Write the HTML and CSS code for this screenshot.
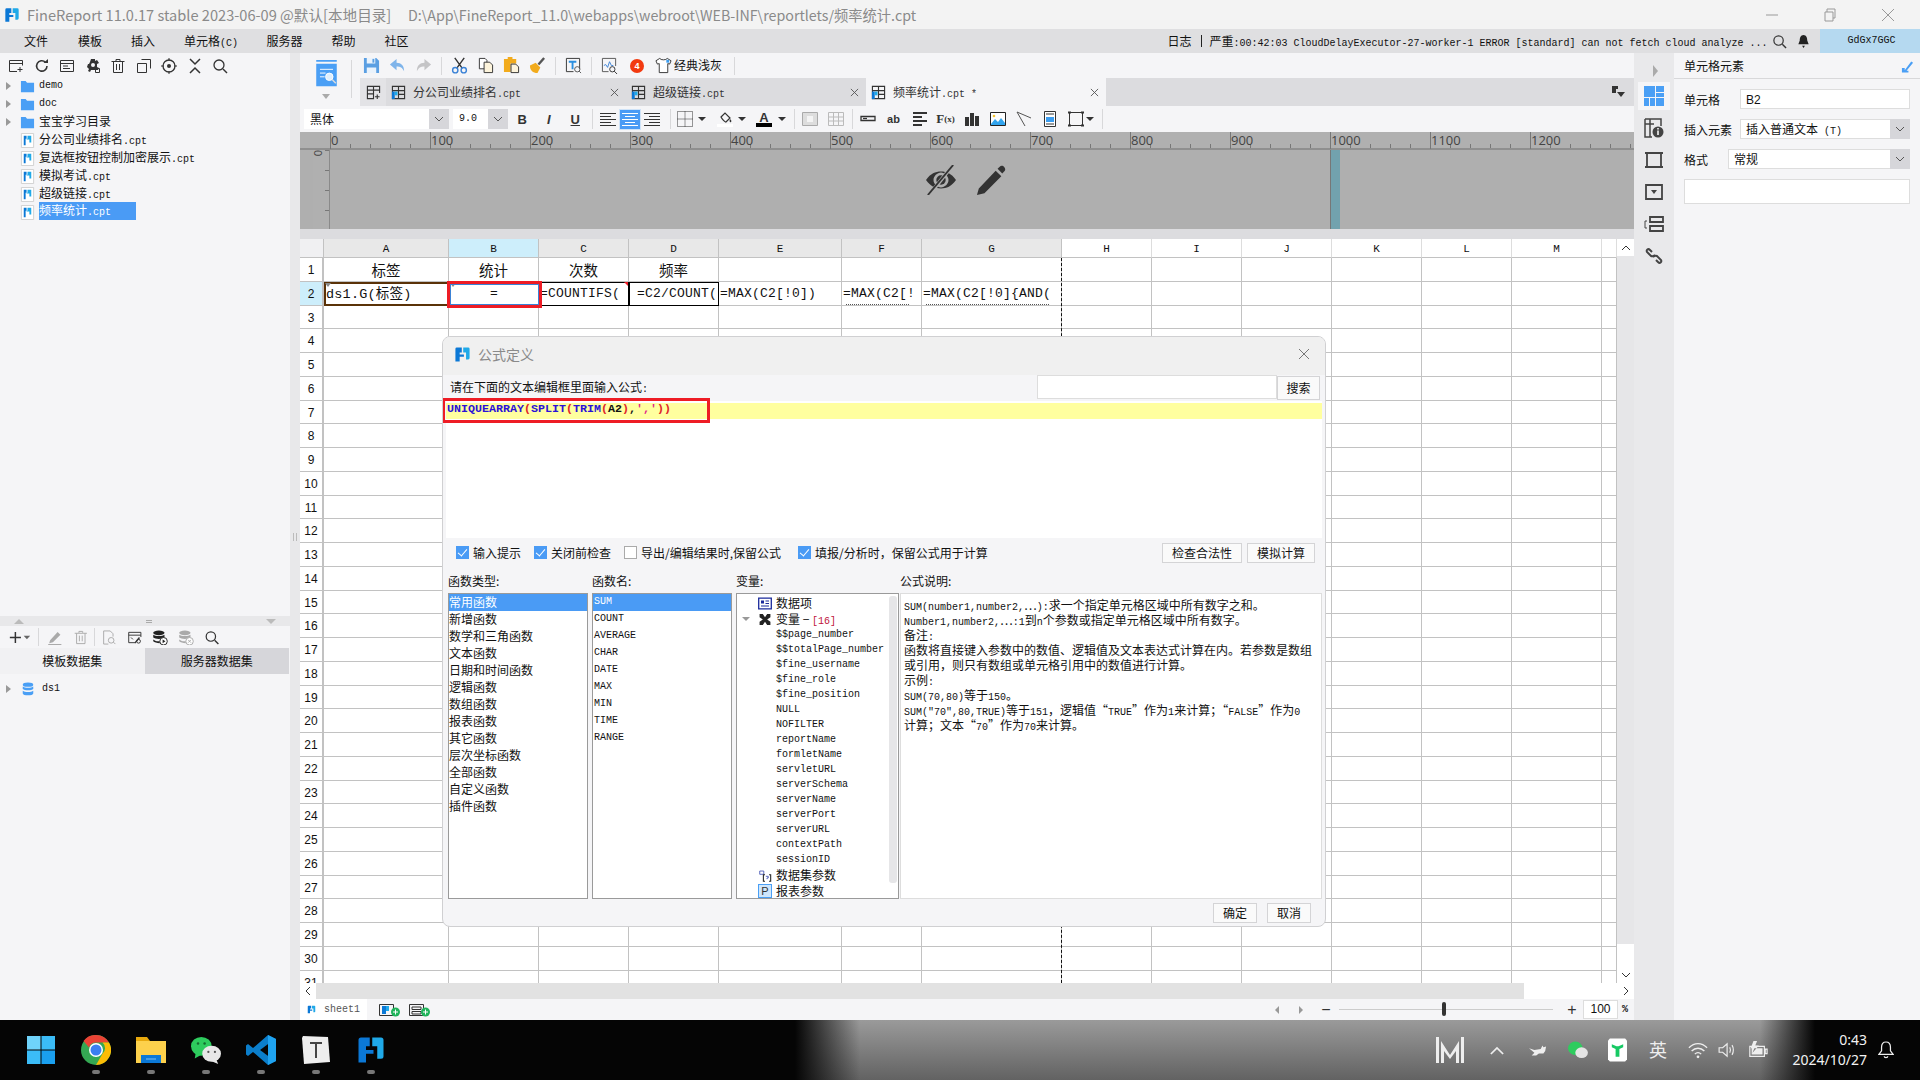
FILE: index.html
```html
<!DOCTYPE html>
<html lang="en">
<head>
    <meta charset="UTF-8">
    <title>FineReport</title>
    <link rel="stylesheet" href="styles.css">
</head>
<body>
<svg class="sprite">
    <symbol id="fr" viewBox="0 0 24 24">
        <path fill="#0b78d6" d="M2 4a2 2 0 0 1 2-2h7v7H8v3h6v3H8v7H2z"/>
        <path fill="#1fa9e8" d="M13 2h7a2 2 0 0 1 2 2v13a2 2 0 0 1-2 2h-3V9h-4z"/>
    </symbol>
    <symbol id="sheetico" viewBox="0 0 16 16">
        <path fill="#fff" stroke="#d0d0d0" d="M1.500.5h13v15h-13z"/>
        <path fill="#0b78d6" d="M4 3h3v3H6v7H4z"/>
        <path fill="#1fa9e8" d="M8 3h4v7h-2V7H7V6h1z"/>
    </symbol>
    <symbol id="gridtab" viewBox="0 0 16 16">
        <path fill="none" stroke="#333" stroke-width="1.200" d="M1.500 1.500h13v13h-13zM1.500 6h13M8 1.500v13M8 10h6.500"/>
        <path fill="#0b78d6" d="M1 7h3v8H1z"/>
        <path fill="#1fa9e8" d="M4 7h3v4H4z"/>
    </symbol>
    <symbol id="folder" viewBox="0 0 16 16">
        <path fill="#4a9ff5" d="M1 2h5l1.500 2H15v10H1z"/>
    </symbol>
    <symbol id="chev" viewBox="0 0 12 12">
        <path fill="none" stroke="#555" d="M2 4l4 4 4-4"/>
    </symbol>
    <symbol id="dd" viewBox="0 0 8 8">
        <path fill="#333" d="M0 2h8L4 6z"/>
    </symbol>
</svg>

<div class="app">
    <header class="titlebar">
        <svg class="title-logo"><use href="#fr"/></svg>
        <span class="title-a">FineReport 11.0.17 stable 2023-06-09 @默认[本地目录]</span>
        <span class="title-b">D:\App\FineReport_11.0\webapps\webroot\WEB-INF\reportlets/频率统计.cpt</span>
        <div class="winbtns">
            <svg viewBox="0 0 14 14"><path d="M1 7h12" stroke="#999"/></svg>
            <svg viewBox="0 0 14 14"><path fill="none" stroke="#999" d="M2 4h8v9H2zM4 4V1h8v9h-2"/></svg>
            <svg viewBox="0 0 14 14"><path fill="none" stroke="#999" d="M1 1l12 12M13 1L1 13"/></svg>
        </div>
    </header>

    <nav class="menubar">
        <span class="m m1">文件</span>
        <span class="m m2">模板</span>
        <span class="m m3">插入</span>
        <span class="m m4">单元格<i class="en">(C)</i></span>
        <span class="m m5">服务器</span>
        <span class="m m6">帮助</span>
        <span class="m m7">社区</span>
        <div class="logbar">
            <span>日志</span>
            <b class="logsep"></b>
            <span class="logtext">严重<i class="en">:00:42:03 CloudDelayExecutor-27-worker-1 ERROR [standard] can not fetch cloud analyze ...</i></span>
            <svg class="logicon" viewBox="0 0 16 16"><circle cx="7" cy="7" r="5" fill="none" stroke="#333" stroke-width="1.300"/><path d="M11 11l4 4" stroke="#333" stroke-width="1.500"/></svg>
            <svg class="logicon" viewBox="0 0 16 16"><path fill="#222" d="M8 1c3 0 4 3 4 6l1.500 4h-11L4 7c0-3 1-6 4-6zM6.500 12.500h3L8 15z"/></svg>
        </div>
        <div class="usercell en">GdGx7GGC</div>
    </nav>

    <div class="work">
        <aside class="left">
            <div class="left-top">
                <div class="ltools">
                    <svg viewBox="0 0 16 16"><path fill="none" stroke="#333" d="M1.500 2.500h13v5M9 13.500H1.500v-11M1.500 5.500h13M12 9v5M9.500 11.500h5"/></svg>
                    <svg viewBox="0 0 16 16"><path fill="none" stroke="#333" stroke-width="1.600" d="M13 8a5.200 5.200 0 1 1-1.600-3.800"/><path fill="#333" d="M9.500 5h4.500V1z"/></svg>
                    <svg viewBox="0 0 16 16"><path fill="none" stroke="#333" d="M1.500 2.500h13v11h-13zM1.500 5.500h13M4 8h5M4 10.500h7"/></svg>
                    <svg viewBox="0 0 16 16"><path fill="#333" d="M6 1h4v2l2-1 2 3-2 1v3l2 1-1 2H6l-1 2-2-1 1-2-2-2 1-3 1 0 1-2z"/><circle cx="8" cy="7" r="2" fill="#f5f5f7"/><path fill="none" stroke="#333" d="M10.500 10.500h4v4h-4z"/></svg>
                    <svg viewBox="0 0 16 16"><path fill="none" stroke="#333" d="M1.500 3.500h13M6 3V1.500h4V3M3.500 3.500v11h9v-11M6.500 6v6M9.500 6v6"/></svg>
                    <svg viewBox="0 0 16 16"><path fill="none" stroke="#333" d="M5.500 1.500h9v9M1.500 5.500h9v9h-9z"/></svg>
                    <svg viewBox="0 0 16 16"><circle cx="8" cy="8" r="6" fill="none" stroke="#333" stroke-width="1.300"/><circle cx="8" cy="8" r="2" fill="#333"/><path stroke="#333" d="M8 0v3M8 13v3M0 8h3M13 8h3"/></svg>
                    <svg viewBox="0 0 16 16"><path fill="none" stroke="#333" stroke-width="1.500" d="M3 1l5 5 5-5M3 15l5-5 5 5"/></svg>
                    <svg viewBox="0 0 16 16"><circle cx="7" cy="7" r="5" fill="none" stroke="#333" stroke-width="1.300"/><path d="M11 11l4 4" stroke="#333" stroke-width="1.500"/></svg>
                </div>
                <ul class="tree">
                    <li><i class="tri"></i><svg><use href="#folder"/></svg><span class="en">demo</span></li>
                    <li><i class="tri"></i><svg><use href="#folder"/></svg><span class="en">doc</span></li>
                    <li><i class="tri"></i><svg><use href="#folder"/></svg><span>宝宝学习目录</span></li>
                    <li><i class="tri none"></i><svg><use href="#sheetico"/></svg><span>分公司业绩排名<i class="en">.cpt</i></span></li>
                    <li><i class="tri none"></i><svg><use href="#sheetico"/></svg><span>复选框按钮控制加密展示<i class="en">.cpt</i></span></li>
                    <li><i class="tri none"></i><svg><use href="#sheetico"/></svg><span>模拟考试<i class="en">.cpt</i></span></li>
                    <li><i class="tri none"></i><svg><use href="#sheetico"/></svg><span>超级链接<i class="en">.cpt</i></span></li>
                    <li><i class="tri none"></i><svg><use href="#sheetico"/></svg><span class="sel">频率统计<i class="en">.cpt</i></span></li>
                </ul>
            </div>
            <div class="splitbar"><i class="up"></i><b></b><i class="down"></i></div>
            <div class="dstools">
                <svg class="w26" viewBox="0 0 26 16"><path stroke="#333" stroke-width="1.600" d="M8 2v12M2 8h12"/><path fill="#666" d="M17 6h7l-3.500 4z"/></svg>
                <i class="vsep s1"></i>
                <svg viewBox="0 0 16 16"><path fill="#aaa" d="M3 11l8-9 3 3-8 8-4 1zM1 15h14v1H1z"/></svg>
                <svg viewBox="0 0 16 16"><path fill="none" stroke="#aaa" d="M1.500 3.500h13M6 3V1.500h4V3M3.500 3.500v11h9v-11M6.500 6v6M9.500 6v6"/></svg>
                <i class="vsep s2"></i>
                <svg viewBox="0 0 16 16"><path fill="none" stroke="#aaa" d="M12.500 7V4l-3-3h-7v14h5"/><circle cx="10.500" cy="11" r="3" fill="none" stroke="#aaa"/><path stroke="#aaa" d="M13 13l2 2"/></svg>
                <svg viewBox="0 0 16 16"><path fill="none" stroke="#333" d="M1.500 2.500h13v5M8 13.500H1.500v-11M1.500 5.500h13M4 8l2 2"/><path stroke="#333" stroke-width="1.500" d="M8 14l5-6"/><circle cx="12" cy="12" r="2" fill="none" stroke="#333"/></svg>
                <svg viewBox="0 0 16 16"><ellipse cx="7" cy="3" rx="6" ry="2.500" fill="#222"/><path fill="#222" d="M1 5c2 2 10 2 12 0v3c-2 2-10 2-12 0zM1 10c2 2 6 2 7 2v2c-3 0-6-1-7-2z"/><circle cx="12" cy="12" r="4" fill="#fff" stroke="#222"/><path fill="#222" d="M11 10l3 2-3 2z"/></svg>
                <svg viewBox="0 0 16 16"><ellipse cx="7" cy="3" rx="6" ry="2.500" fill="#aaa"/><path fill="#aaa" d="M1 5c2 2 10 2 12 0v3c-2 2-10 2-12 0zM1 10c2 2 6 2 7 2v2c-3 0-6-1-7-2z"/><circle cx="12" cy="12" r="4" fill="#fff" stroke="#aaa"/><path stroke="#aaa" d="M10.500 10.500l3 3M13.500 10.500l-3 3"/></svg>
                <svg viewBox="0 0 16 16"><circle cx="7" cy="7" r="5" fill="none" stroke="#333" stroke-width="1.300"/><path d="M11 11l4 4" stroke="#333" stroke-width="1.500"/></svg>
            </div>
            <div class="dstabs">
                <span class="on">模板数据集</span>
                <span>服务器数据集</span>
            </div>
            <div class="dsrow">
                <i class="tri"></i>
                <svg viewBox="0 0 16 16"><ellipse cx="8" cy="3" rx="6" ry="2.500" fill="#4a9ff5"/><path fill="#4a9ff5" d="M2 5c2 2 10 2 12 0v3c-2 2-10 2-12 0zM2 10c2 2 10 2 12 0v3c0 3-12 3-12 0z"/></svg>
                <span class="en">ds1</span>
            </div>
        </aside>

        <div class="divider"><i></i></div>

        <main class="main">
            <div class="toprow">
                <div class="bigbtn">
                    <svg viewBox="0 0 22 30"><path fill="#4a9ff5" d="M0 0h22v2H0zM0 4h22v24H0z"/><path stroke="#fff" d="M4 10h14M4 14h6M4 18h5"/><circle cx="14" cy="18" r="4" fill="#dfeffd" stroke="#fff"/><path stroke="#ddd" stroke-width="1.500" d="M17 21l4 4"/></svg>
                    <i class="dropg"></i>
                </div>
                <div class="topright">
                    <div class="tb">
                        <svg viewBox="0 0 18 18"><path fill="#5b9fe2" d="M1 1h13l3 3v13H1z"/><path fill="#eaf3fc" d="M4 1h9v6H4zM4 11h10v6H4z"/><path fill="#5b9fe2" d="M10 2h2v4h-2z"/></svg>
                        <svg viewBox="0 0 18 18"><path fill="#7fb4ea" d="M8 2L1 8l7 6v-4c4 0 6 1 8 5 0-6-3-9-8-9z"/></svg>
                        <svg viewBox="0 0 18 18"><path fill="#c4c4c6" d="M10 2l7 6-7 6v-4c-4 0-6 1-8 5 0-6 3-9 8-9z"/></svg>
                        <i class="vsep"></i>
                        <svg viewBox="0 0 18 18"><path stroke="#333" stroke-width="1.500" d="M4 1l8 11M14 1L6 12"/><circle cx="4.500" cy="14" r="2.800" fill="none" stroke="#3b82d6" stroke-width="1.500"/><circle cx="13.500" cy="14" r="2.800" fill="none" stroke="#3b82d6" stroke-width="1.500"/></svg>
                        <svg viewBox="0 0 18 18"><path fill="#fff" stroke="#333" d="M2.500 1.500h6l2 2v9h-8z"/><path fill="#fdf4dc" stroke="#333" d="M7.500 5.500h6l3 3v8h-9z"/></svg>
                        <svg viewBox="0 0 18 18"><path fill="#f2ab1c" d="M1 2h4V0h5v2h4v5H8v9H1z"/><path fill="#fdf4dc" stroke="#333" d="M8.500 7.500h5l3 3v6h-8z"/></svg>
                        <svg viewBox="0 0 18 18"><path fill="#f2ab1c" d="M1 9l6-3 5 5-3 6c-5 0-8-3-8-8z"/><path stroke="#555" stroke-width="2.500" d="M10 8l6-7"/></svg>
                        <i class="vsep"></i>
                        <svg viewBox="0 0 18 18"><path fill="none" stroke="#333" d="M1.500 1.500h14v11M9 15.500H1.500v-14"/><path fill="#2b8fe0" d="M4 4h8v2H9v7H7V6H4z"/><circle cx="13" cy="13" r="2.800" fill="none" stroke="#555"/><path stroke="#555" d="M15 15l2 2"/></svg>
                        <i class="vsep"></i>
                        <svg viewBox="0 0 18 18"><path fill="none" stroke="#555" d="M1.500 1.500h14v8M8 15.500H1.500v-14"/><path fill="none" stroke="#3b82d6" d="M3 9l2-1 2 3 2-6 2 4h2"/><circle cx="12" cy="13" r="2.800" fill="none" stroke="#333"/><path stroke="#333" d="M14 15l3 3"/></svg>
                        <span class="badge">4</span>
                        <svg viewBox="0 0 18 18"><path fill="#fff" stroke="#333" d="M5 1.500L1 4l1.500 3.500L4.500 7v9.500h9V7l2 .5L17 4l-4-2.500c-1 2-7 2-8 0z"/><path fill="#3b9df0" d="M12 3h3v3h-3z"/></svg>
                        <span class="skin">经典浅灰</span>
                        <i class="vsep"></i>
                    </div>
                    <div class="tabs">
                        <span class="tabgrid"><svg viewBox="0 0 16 16"><path fill="none" stroke="#333" stroke-width="1.200" d="M1.500 9.500v-8h13v7M1.500 5.500h13M8 1.500v13h-6.500v-5h6.500M12 10v5M9.500 12.500h5"/></svg></span>
                        <div class="tab"><svg><use href="#gridtab"/></svg><span>分公司业绩排名<i class="en">.cpt</i></span><svg class="x" viewBox="0 0 10 10"><path stroke="#555" d="M1 1l8 8M9 1L1 9"/></svg></div>
                        <div class="tab"><svg><use href="#gridtab"/></svg><span>超级链接<i class="en">.cpt</i></span><svg class="x" viewBox="0 0 10 10"><path stroke="#555" d="M1 1l8 8M9 1L1 9"/></svg></div>
                        <div class="tab on"><svg><use href="#gridtab"/></svg><span>频率统计<i class="en">.cpt *</i></span><svg class="x" viewBox="0 0 10 10"><path stroke="#555" d="M1 1l8 8M9 1L1 9"/></svg></div>
                        <svg class="tabmenu" viewBox="0 0 14 14"><path fill="#333" d="M1 1h6v3H5v4H1z"/><path fill="#333" d="M6 7h8l-4 5z"/></svg>
                    </div>
                </div>
            </div>

            <div class="fmt">
                <div class="sel-box s-font"><span>黑体</span><b><svg><use href="#chev"/></svg></b></div>
                <div class="sel-box s-size"><span class="en">9.0</span><b><svg><use href="#chev"/></svg></b></div>
                <span class="fb f-b">B</span>
                <span class="fb f-i">I</span>
                <span class="fb f-u">U</span>
                <i class="vsep g3"></i>
                <svg class="ali g4" viewBox="0 0 18 14"><path stroke="#333" d="M1 1.500h16M1 4.500h11M1 7.500h16M1 10.500h11M1 13.500h16"/></svg>
                <span class="ali-on"><svg viewBox="0 0 18 14"><path stroke="#fff" d="M1 1.500h16M4 4.500h10M1 7.500h16M4 10.500h10M1 13.500h16"/></svg></span>
                <svg class="ali" viewBox="0 0 18 14"><path stroke="#333" d="M1 1.500h16M6 4.500h11M1 7.500h16M6 10.500h11M1 13.500h16"/></svg>
                <i class="vsep g7"></i>
                <svg class="ic g1" viewBox="0 0 16 16"><path fill="none" stroke="#333" stroke-dasharray="1 1" d="M.5.500h15v15H.5zM.5 8h15M8 .5v15"/></svg>
                <svg class="dsvg"><use href="#dd"/></svg>
                <svg class="ic g6" viewBox="0 0 16 16"><path fill="none" stroke="#333" stroke-width="1.200" d="M4 6l4-4 5 5-4 4c-1 .5-4-3-5-5z"/><path fill="#333" d="M13 8c1 1 2 2 1 3s-2-1-1-3z"/><path fill="#fff" d="M0 13h16v3H0z"/></svg>
                <svg class="dsvg"><use href="#dd"/></svg>
                <svg class="ic g5" viewBox="0 0 16 16"><text class="icon-a" x="8" y="11" text-anchor="middle">A</text><path d="M0 12h16v4H0z"/></svg>
                <svg class="dsvg g1"><use href="#dd"/></svg>
                <i class="vsep g8"></i>
                <svg class="ic g2" viewBox="0 0 16 16"><path fill="#ddd" stroke="#aaa" d="M.5 1.500h15v13H.5z"/><path fill="#f4f4f4" d="M5 5h6v6H5z"/></svg>
                <svg class="ic" viewBox="0 0 16 16"><path fill="none" stroke="#bbb" d="M.5 1.500h15v13H.5zM.5 6h15M.5 10h15M5.500 1.500v13M10.500 1.500v13"/></svg>
                <i class="vsep g3"></i>
                <svg class="ic g2" viewBox="0 0 16 16"><path fill="none" stroke="#333" stroke-width="1.300" d="M1 5.500h14v4H1z"/><path stroke="#333" stroke-width="1.300" d="M3 7.500h4"/></svg>
                <span class="ic ab">ab</span>
                <svg class="ic" viewBox="0 0 16 16"><path stroke="#333" stroke-width="2" d="M1 2h14M1 6h9M1 10h14M1 14h9"/></svg>
                <span class="ic fx">F<small>(x)</small></span>
                <svg class="ic" viewBox="0 0 16 16"><path fill="#333" d="M1 6h4v9H1zM6 2h4v13H6zM11 5h4v10h-4z"/></svg>
                <svg class="ic" viewBox="0 0 16 16"><path fill="#fff" stroke="#222" d="M.5 1.500h15v13H.5z"/><path fill="#31a4ee" d="M1 13l4-5 3 3 3-4 4 5v2H1z"/><circle cx="4" cy="5" r="1.300" fill="#f4c430"/></svg>
                <svg class="ic" viewBox="0 0 16 16"><path fill="none" stroke="#555" d="M1 1l14 6M1 1l8 14"/></svg>
                <svg class="ic" viewBox="0 0 16 16"><path fill="#fff" stroke="#333" d="M2.500 .5h11v15h-11z"/><path fill="#3b9df0" d="M4 6h8v5H4z"/><path stroke="#333" d="M4 3h8M4 13h8"/></svg>
                <svg class="ic" viewBox="0 0 16 16"><path fill="none" stroke="#333" d="M1.500 1.500h13v13h-13z"/><path stroke="#333" stroke-width="2" d="M0 1.500h3M13 1.500h3M0 14.500h3M13 14.500h3"/></svg>
                <svg class="dsvg gm3"><use href="#dd"/></svg>
                <i class="vsep g8"></i>
            </div>

            <div class="ruler"><span>0</span><span>100</span><span>200</span><span>300</span><span>400</span><span>500</span><span>600</span><span>700</span><span>800</span><span>900</span><span>1000</span><span>1100</span><span>1200</span></div>
            <div class="canvas">
                <div class="vruler"><span>0</span></div>
                <div class="canvas-mid">
                    <svg viewBox="0 0 34 32"><path fill="#333" d="M1 16C6 9 11 7 17 7c6 0 11 2 16 9-5 7-10 9-16 9C11 25 6 23 1 16zm8 0c0 4 4 8 8 8s8-4 8-8-4-8-8-8-8 4-8 8z"/><circle cx="17" cy="16" r="5" fill="#333"/><path stroke="#afafaf" stroke-width="4" d="M29 1L5 31"/><path stroke="#333" stroke-width="2" d="M30 0L3 32"/></svg>
                    <svg viewBox="0 0 32 32"><path fill="#333" d="M3 25L21 6l6 6L9 30l-8 2zM23 4l2-2c2-2 4-1 5 0s2 3 0 5l-2 2z"/></svg>
                </div>
                <div class="pagebar"></div>
            </div>
            <div class="gapbar"></div>

            <div class="sheet">
                <div class="grid" id="grid"></div>
                <div class="vscroll">
                    <span class="sbtn"><svg viewBox="0 0 10 6"><path fill="none" stroke="#333" d="M1 5l4-4 4 4"/></svg></span>
                    <b></b>
                    <span class="sbtn"><svg viewBox="0 0 10 6"><path fill="none" stroke="#333" d="M1 1l4 4 4-4"/></svg></span>
                </div>
            </div>
            <div class="hscroll">
                <span class="sbtn"><svg viewBox="0 0 6 10"><path fill="none" stroke="#333" d="M5 1L1 5l4 4"/></svg></span>
                <b></b>
                <span class="sbtn right"><svg viewBox="0 0 6 10"><path fill="none" stroke="#333" d="M1 1l4 4-4 4"/></svg></span>
            </div>
            <div class="status">
                <div class="sheettab"><svg><use href="#fr"/></svg><span class="en">sheet1</span></div>
                <svg class="addsheet" viewBox="0 0 22 14"><path fill="none" stroke="#333" d="M.5 1.500h14v11H.5z"/><path fill="#0b78d6" d="M3 3h4v8H3z"/><path fill="#1fa9e8" d="M7 3h3v5H7z"/><circle cx="16.500" cy="9" r="4.500" fill="#1fb35a"/><path stroke="#fff" d="M14 9h5M16.500 6.500v5"/></svg>
                <svg class="addsheet" viewBox="0 0 22 14"><path fill="none" stroke="#333" d="M.5 1.500h14v11H.5zM3 4h9v2.500H3zM3 8.500h9V11H3z"/><circle cx="16.500" cy="9" r="4.500" fill="#1fb35a"/><path stroke="#fff" d="M14 9h5M16.500 6.500v5"/></svg>
                <div class="zoomgroup">
                    <i class="trinav back"></i>
                    <i class="trinav"></i>
                    <span class="zm">−</span>
                    <div class="slider"><b></b></div>
                    <span class="zm">+</span>
                    <span class="zoomval">100</span>
                    <span class="pct">%</span>
                </div>
            </div>
        </main>

        <div class="strip">
            <i class="striparrow"></i>
            <span class="sti on"><svg viewBox="0 0 20 20"><path fill="#4a9ff5" d="M0 0h11v11H0zM12 0h8v6h-8zM12 7h8v4h-8zM0 12h5v8H0zM6 12h5v8H6zM12 12h8v8h-8z"/></svg></span>
            <span class="sti"><svg viewBox="0 0 20 20"><path fill="none" stroke="#444" stroke-width="1.500" d="M1 1h16v7M8 19H1V1M1 6h9M6 1v18"/><circle cx="14" cy="14" r="5.500" fill="#444"/><path stroke="#fff" stroke-width="1.500" d="M14 12.500V17M14 10v1.500"/></svg></span>
            <span class="sti"><svg viewBox="0 0 20 20"><path fill="none" stroke="#444" stroke-width="1.800" d="M3 3h14v14H3z"/><path stroke="#444" stroke-width="2" d="M1 3h4M15 3h4M1 17h4M15 17h4"/></svg></span>
            <span class="sti"><svg viewBox="0 0 20 20"><path fill="none" stroke="#444" stroke-width="1.800" d="M2 3h16v14H2z"/><path fill="#444" d="M7 8h6l-3 4z"/></svg></span>
            <span class="sti"><svg viewBox="0 0 20 20"><path fill="none" stroke="#444" stroke-width="1.800" d="M6 3h13v5H6zM6 12h13v5H6z"/><path fill="none" stroke="#444" d="M3 7H1v7h2"/></svg></span>
            <span class="sti"><svg viewBox="0 0 20 20"><path fill="none" stroke="#444" stroke-width="2" d="M8 6L6 4C4 2 2 4 3 6l4 4c2 1 3 0 4-1M12 14l2 2c2 2 4 0 3-2l-4-4c-2-1-3 0-4 1"/></svg></span>
        </div>

        <aside class="props">
            <div class="prop-head"><span>单元格元素</span><svg viewBox="0 0 14 14"><path fill="#4a9ff5" d="M1 13V8h3v2.500L11 1l2 1.500-7 8.500h2v2z"/></svg></div>
            <div class="prop-row"><label>单元格</label><div class="pfield w170"><span class="b2">B2</span></div></div>
            <div class="prop-row"><label>插入元素</label><div class="pfield w170 sp"><span>插入普通文本<i class="en"> (T)</i></span><b><svg><use href="#chev"/></svg></b></div></div>
            <div class="prop-row"><label class="short">格式</label><div class="pfield w182 sp"><span>常规</span><b><svg><use href="#chev"/></svg></b></div></div>
            <div class="pblank"></div>
        </aside>
    </div>

    <footer class="taskbar">
        <div class="tasks">
            <span class="task"><svg viewBox="0 0 30 30"><path fill="#6fd3fa" d="M1 1h13.500v13.500H1z"/><path fill="#3bbcf7" d="M15.500 1H29v13.500H15.500zM1 15.500h13.500V29H1z"/><path fill="#1aa0f0" d="M15.500 15.500H29V29H15.500z"/></svg></span>
            <span class="task"><svg viewBox="0 0 30 30"><circle cx="15" cy="15" r="15" fill="#34a853"/><path fill="#ea4335" d="M15 0a15 15 0 0 1 13 7.500H15a7.500 7.500 0 0 0-7 5L2.500 6A15 15 0 0 1 15 0z"/><path fill="#fbbc05" d="M28 7.500A15 15 0 0 1 15 30l6.500-11.200a7.500 7.500 0 0 0 0-11.300z"/><circle cx="15" cy="15" r="7" fill="#fff"/><circle cx="15" cy="15" r="5.500" fill="#3b7ff0"/></svg></span>
            <span class="task"><svg viewBox="0 0 30 30"><path fill="#e8a90d" d="M0 2h11l3 4h16v6H0z"/><path fill="#fdd14c" d="M0 6h30v22H0z"/><path fill="#0b78d6" d="M5 20h20v8H5z"/><path stroke="#7fc0f5" d="M10 24h10"/></svg></span>
            <span class="task"><svg viewBox="0 0 32 30"><ellipse cx="11" cy="11" rx="11" ry="10" fill="#2ecc5e"/><path fill="#2ecc5e" d="M5 18l-1 6 7-4z"/><ellipse cx="22" cy="19" rx="10" ry="8.500" fill="#e8e8e8"/><path fill="#e8e8e8" d="M27 25l2 5-7-3z"/><circle cx="7.500" cy="8" r="1.300" fill="#146b30"/><circle cx="14.500" cy="8" r="1.300" fill="#146b30"/><circle cx="18.500" cy="17" r="1.200" fill="#555"/><circle cx="25.500" cy="17" r="1.200" fill="#555"/></svg></span>
            <span class="task"><svg viewBox="0 0 30 30"><path fill="#0b7ecb" d="M22 0l8 4v22l-8 4L7 17l-5 4-2-1.500v-9L2 9l5 4z"/><path fill="#1fa3f0" d="M22 0l8 4v22l-8 4zM22 9l-8 6 8 6z"/><path fill="#050505" d="M22 9l-8 6 8 6z"/></svg></span>
            <span class="task"><svg viewBox="0 0 30 30"><path fill="#eee" d="M2 1l25 1 2 25-26 2-2-26z"/><path fill="#444" d="M9 7h12v2h-5v14h-2V9H9z"/></svg></span>
            <span class="task"><svg><use href="#fr"/></svg></span>
        </div>
        <div class="tray">
            <svg class="t-m" viewBox="0 0 28 26"><path fill="#eee" d="M0 0h3v26H0zM25 0h3v26h-3zM5 4l9 14 9-14v22h-3V14l-6 8-6-8v12H5z"/></svg>
            <svg class="t-up" viewBox="0 0 16 10"><path fill="none" stroke="#eee" stroke-width="2" d="M1 9l7-7 7 7"/></svg>
            <svg class="t-cat" viewBox="0 0 20 12"><path fill="#eee" d="M0 4l6 2 7-1 2-4 1 2 3-1-1 5-2 3H11l-3 2H3l3-3z"/></svg>
            <svg class="t-wx" viewBox="0 0 22 20"><ellipse cx="8" cy="8" rx="8" ry="7.500" fill="#2ecc5e"/><ellipse cx="15" cy="13" rx="7" ry="6" fill="#e4e4e4"/></svg>
            <svg class="t-t" viewBox="0 0 20 24"><path fill="#fff" d="M2 0h16l2 2v20l-2 2H2l-2-2V2z"/><path fill="#17c964" d="M4 6l5 2h2l5-2v3l-4 2v8H8v-8L4 9z"/></svg>
            <span class="t-ime">英</span>
            <svg class="t-wifi" viewBox="0 0 22 18"><path fill="none" stroke="#eee" stroke-width="1.500" d="M1 6c6-6 14-6 20 0M4 9.500c4-4 10-4 14 0M7.500 13c2-2 5-2 7 0"/><circle cx="11" cy="16" r="1.500" fill="#eee"/></svg>
            <svg class="t-vol" viewBox="0 0 22 18"><path fill="none" stroke="#eee" stroke-width="1.300" d="M1 6.500h4L10 2v14l-5-4.500H1zM13 6c1 2 1 4 0 6M15.500 3.500c2 3 2 8 0 11"/></svg>
            <svg class="t-bat" viewBox="0 0 22 20"><path fill="none" stroke="#eee" stroke-width="1.300" d="M2 6h16v11H2zM19 9h2v5h-2z"/><path fill="#eee" d="M4 8h12v7H4zM6 0L3 8h4l-2 5 7-8H8l2-5z"/></svg>
            <div class="clock"><span>0:43</span><span>2024/10/27</span></div>
            <svg class="t-bell" viewBox="0 0 18 20"><path fill="none" stroke="#eee" stroke-width="1.400" d="M9 1c4 0 5 3 5 6v4l3 4H1l3-4V7c0-3 1-6 5-6zM7 17c0 2 4 2 4 0"/></svg>
        </div>
    </footer>

    <!-- formula dialog -->
    <div class="dialog">
        <div class="dlg-head">
            <svg><use href="#fr"/></svg>
            <span>公式定义</span>
            <svg class="dlg-x" viewBox="0 0 12 12"><path fill="none" stroke="#777" d="M1 1l10 10M11 1L1 11"/></svg>
        </div>
        <div class="dlg-body">
            <div class="dlg-line1">
                <span>请在下面的文本编辑框里面输入公式<i class="en">:</i></span>
                <div class="searchbox"></div>
                <span class="btn b-search">搜索</span>
            </div>
            <div class="editor">
                <div class="codeline"><span class="fn">UNIQUEARRAY</span><span class="pn">(</span><span class="fn">SPLIT</span><span class="pn">(</span><span class="fn">TRIM</span><span class="pn">(</span>A2<span class="pn">)</span>,<span class="st">','</span><span class="pn">))</span></div>
            </div>
            <div class="checks">
                <span class="chk k1"><i class="box on"></i>输入提示</span>
                <span class="chk k2"><i class="box on"></i>关闭前检查</span>
                <span class="chk k3"><i class="box"></i>导出/编辑结果时,保留公式</span>
                <span class="chk"><i class="box on"></i>填报/分析时，保留公式用于计算</span>
                <span class="btn b-check">检查合法性</span>
                <span class="btn b-sim">模拟计算</span>
            </div>
            <div class="cols-head">
                <span class="c1">函数类型:</span>
                <span class="c2">函数名:</span>
                <span class="c3">变量:</span>
                <span class="c4">公式说明:</span>
            </div>
            <div class="cols">
                <ul class="list c1">
                    <li class="on">常用函数</li><li>新增函数</li><li>数学和三角函数</li><li>文本函数</li><li>日期和时间函数</li><li>逻辑函数</li><li>数组函数</li><li>报表函数</li><li>其它函数</li><li>层次坐标函数</li><li>全部函数</li><li>自定义函数</li><li>插件函数</li>
                </ul>
                <ul class="list c2 en">
                    <li class="on">SUM</li><li>COUNT</li><li>AVERAGE</li><li>CHAR</li><li>DATE</li><li>MAX</li><li>MIN</li><li>TIME</li><li>RANGE</li>
                </ul>
                <div class="vars c3">
                    <div class="vrow top"><svg viewBox="0 0 14 12"><path fill="#fff" stroke="#1b2a9c" stroke-width="1.300" d="M.7 .7h12.600v10.600H.7z"/><path fill="#1b2a9c" d="M3 3h3v3H3zM7.500 3H11v1H7.500zM7.500 5.500H11v1H7.500zM3 8h8v1H3z"/></svg><span>数据项</span></div>
                    <div class="vrow top"><i class="opened"></i><svg viewBox="0 0 12 12"><path fill="#222" d="M1 1h3l2 3 2-3h3v3L8 6l3 2v3H8L6 8l-2 3H1V8l3-2-3-2z"/></svg><span>变量 − <em class="en">[16]</em></span></div>
                    <div class="vsub en">
                        <span>$$page_number</span><span>$$totalPage_number</span><span>$fine_username</span><span>$fine_role</span><span>$fine_position</span><span>NULL</span><span>NOFILTER</span><span>reportName</span><span>formletName</span><span>servletURL</span><span>serverSchema</span><span>serverName</span><span>serverPort</span><span>serverURL</span><span>contextPath</span><span>sessionID</span>
                    </div>
                    <div class="vrow top"><svg viewBox="0 0 16 16"><path fill="none" stroke="#3a4bb0" d="M1.500 2.500h5v4h-5z"/><path fill="none" stroke="#222" stroke-width="1.300" d="M8 7H6v8h2M13 7h2v8h-2"/><path fill="none" stroke="#3a4bb0" d="M9 9h3v2h-1.500v1.500"/></svg><span>数据集参数</span></div>
                    <div class="vrow top"><span class="pico">P</span><span>报表参数</span></div>
                    <b class="vbar"></b>
                </div>
                <div class="desc c4">
                    <p><i class="en">SUM(number1,number2,</i>⋯<i class="en">):</i>求一个指定单元格区域中所有数字之和。</p>
                    <p><i class="en">Number1,number2,</i>⋯<i class="en">:1</i>到<i class="en">n</i>个参数或指定单元格区域中所有数字。</p>
                    <p>备注<i class="en">:</i></p>
                    <p>函数将直接键入参数中的数值、逻辑值及文本表达式计算在内。若参数是数组</p>
                    <p>或引用，则只有数组或单元格引用中的数值进行计算。</p>
                    <p>示例<i class="en">:</i></p>
                    <p><i class="en">SUM(70,80)</i>等于<i class="en">150</i>。</p>
                    <p><i class="en">SUM("70",80,TRUE)</i>等于<i class="en">151</i>，逻辑值“<i class="en">TRUE</i>”作为<i class="en">1</i>来计算；“<i class="en">FALSE</i>”作为<i class="en">0</i></p>
                    <p>计算；文本“<i class="en">70</i>”作为<i class="en">70</i>来计算。</p>
                </div>
            </div>
            <div class="dlg-foot">
                <span class="btn">确定</span>
                <span class="btn">取消</span>
            </div>
        </div>
        <div class="redbox formula-mark"></div>
    </div>
</div>
<script src="script.js"></script>
</body>
</html>
```

FILE: styles.css
```css
* { box-sizing: border-box; }
html, body { margin: 0; height: 100%; }
body {
    width: 1920px;
    height: 1080px;
    overflow: hidden;
    font: 12px/1.2 "Noto Sans CJK SC", sans-serif;
    color: #111;
    background: #f5f5f7;
}
i, em { font-style: normal; }
ul { list-style: none; margin: 0; padding: 0; }
p { margin: 0; white-space: nowrap; }
svg { display: block; flex: none; }
.sprite { width: 0; height: 0; position: absolute; }
.en { font-family: "Liberation Mono", monospace; font-size: 10px; line-height: 1; }

.app { position: relative; width: 1920px; height: 1080px; display: flex; flex-direction: column; }

/* title bar */
.titlebar { height: 29px; background: #f3f3f3; display: flex; align-items: center; color: #8a8a8a; font-size: 14.600px; padding-left: 4px; }
.title-logo { width: 16px; height: 16px; margin-right: 7px; }
.title-a { width: 381px; white-space: nowrap; }
.title-b { white-space: nowrap; font-size: 14.250px; }
.winbtns { margin-left: auto; display: flex; gap: 44px; padding-right: 25px; }
.winbtns svg { width: 14px; height: 14px; }

/* menu */
.menubar { height: 24px; background: #dfdfe1; display: flex; align-items: center; font-size: 12px; padding-left: 24px; }
.m { white-space: nowrap; flex: none; }
.m1 { width: 54px; }
.m2, .m3 { width: 53px; }
.m4 { width: 82.500px; }
.m5 { width: 65px; }
.m6 { width: 53px; }
.m7 { width: 30px; }
.logbar { margin-left: 753px; display: flex; align-items: center; white-space: nowrap; flex: none; }
.logsep { width: 1px; height: 12px; background: #222; margin: 0 8px 0 9px; flex: none; }
.logtext { width: 562px; flex: none; }
.logicon { width: 15px; height: 15px; margin-right: 9px; }
.usercell { margin-left: auto; width: 104px; height: 24px; background: #b5d9f0; display: flex; align-items: center; justify-content: center; flex: none; }

.work { height: 967px; display: flex; }

/* left panel */
.left { width: 290px; background: #f5f5f7; display: flex; flex-direction: column; }
.left-top { height: 563px; }
.ltools { height: 24px; display: flex; align-items: center; gap: 9.500px; padding: 2px 0 0 8px; }
.ltools svg { width: 16px; height: 16px; }
.tree li { height: 18px; display: flex; align-items: center; padding-left: 6px; white-space: nowrap; }
.tree li > span:not(.en) { padding-bottom: 2px; }
.tree svg { width: 15px; height: 15px; margin: 0 4px 0 9px; }
.tri { width: 0; height: 0; border-left: 5px solid #999; border-top: 4px solid transparent; border-bottom: 4px solid transparent; }
.tri.none { border-color: transparent; }
.tree li > .sel { background: #4a9bf5; color: #fff; width: 97px; height: 18px; display: block; line-height: 16px; padding-bottom: 0; margin-top: -2px; }
.splitbar { height: 10px; background: #e8e8ea; display: flex; justify-content: space-between; align-items: center; padding: 0 14px; }
.splitbar b { width: 6px; height: 3px; border-top: 1px solid #aaa; border-bottom: 1px solid #aaa; margin-left: 8px; }
.up { border-left: 5px solid transparent; border-right: 5px solid transparent; border-bottom: 5px solid #bbb; }
.down { border-left: 5px solid transparent; border-right: 5px solid transparent; border-top: 5px solid #bbb; }
.dstools { height: 22px; display: flex; align-items: center; padding-left: 8px; }
.dstools svg { width: 25.600px; height: 15px; padding: 0 5px; }
.dstools svg.w26 { width: 24px; padding: 0; }
.vsep { width: 1px; height: 18px; background: #d8d8da; flex: none; }
.dstools .s1 { margin: 0 3px 0 6px; }
.dstools .s2 { margin: 0 1px; }
.dstabs { height: 26px; display: flex; line-height: 25px; font-size: 12px; text-align: center; }
.dstabs span { width: 144.500px; background: #d6d6da; }
.dstabs .on { background: #f1f1f3; }
.dsrow { height: 30px; display: flex; align-items: center; padding-left: 6px; }
.dsrow svg { width: 14px; height: 14px; margin: 0 7px 0 10px; }

.divider { width: 10px; background: #e8e8ea; display: flex; align-items: center; }
.divider i { height: 8px; width: 4px; border-left: 1px solid #bbb; border-right: 1px solid #bbb; margin-left: 3px; }

/* main */
.main { width: 1334px; display: flex; flex-direction: column; background: #f5f5f7; }
.toprow { height: 53px; display: flex; }
.bigbtn { width: 60px; display: flex; flex-direction: column; align-items: center; padding: 7px 8px 0 0; gap: 6px; position: relative; }
.bigbtn::after { content: ""; position: absolute; left: 51px; top: 7px; height: 38px; width: 1px; background: #d8d8da; }
.bigbtn svg { width: 21px; height: 28px; }
.dropg { border-left: 4px solid transparent; border-right: 4px solid transparent; border-top: 5px solid #aaa; }
.topright { flex: 1; display: flex; flex-direction: column; }
.tb { height: 25px; display: flex; align-items: center; padding-left: 3px; gap: 9px; }
.tb svg { width: 17px; height: 17px; }
.badge { width: 14px; height: 14px; border-radius: 50%; background: #f23a10; color: #fff; font: bold 9px/14px "Liberation Sans", sans-serif; text-align: center; margin: 0 2px 0 3px; }
.skin { margin: 0 3px 0 -7px; white-space: nowrap; }
.tabs { height: 28px; background: #dcdcdf; display: flex; align-items: stretch; position: relative; }
.tabgrid { width: 26px; display: flex; align-items: center; justify-content: center; background: #e3e3e6; }
.tabgrid svg { width: 15px; height: 15px; }
.tab { width: 240px; display: flex; align-items: center; padding: 0 7px 0 5px; gap: 7px; color: #333; white-space: nowrap; background: #dcdcdf; }
.tab > svg:first-child { width: 15px; height: 15px; }
.tab .x { width: 9px; height: 9px; margin-left: auto; }
.tab.on { background: #f5f5f7; }
.tabmenu { width: 14px; height: 14px; position: absolute; right: 9px; top: 7px; }

.fmt { height: 26px; display: flex; align-items: center; padding-left: 4px; white-space: nowrap; }
.sel-box { height: 20px; background: #fff; display: flex; align-items: center; padding-left: 6px; flex: none; }
.sel-box b { margin-left: auto; height: 20px; width: 20px; background: #d6d6da; display: flex; align-items: center; justify-content: center; }
.sel-box svg { width: 12px; height: 12px; }
.s-font { width: 145px; margin-right: 4px; }
.s-size { width: 55px; }
.fb { width: 26.500px; flex: none; text-align: center; font: bold 13px "Liberation Sans", sans-serif; color: #333; }
.f-b { margin-left: 1px; }
.f-i { font-style: italic; }
.f-u { text-decoration: underline; }
.fmt .vsep { height: 20px; }
.g1 { margin-left: 1px; }
.g2 { margin-left: 2px; }
.g3 { margin-left: 3px; }
.g4 { margin-left: 4px; }
.g5 { margin-left: 5px; }
.g6 { margin-left: 6px; }
.g7 { margin-left: 7px; }
.g8 { margin-left: 8px; }
.gm3 { margin-left: -3px; }
.ali { width: 22px; height: 14px; padding: 0 2px; flex: none; }
.ali-on { width: 22px; height: 21px; background: #4a9bf5; border: 1px solid #cfe3f8; display: flex; align-items: center; justify-content: center; flex: none; }
.ali-on svg { width: 18px; height: 14px; }
.ic { width: 26px; height: 16px; padding: 0 5px; display: flex; align-items: center; justify-content: center; flex: none; }
.dsvg { width: 8px; height: 8px; }
.icon-a { font: bold 13px "Liberation Sans", sans-serif; fill: #333; }
.ab { font: bold 11px "Liberation Sans", sans-serif; color: #333; }
.fx { font: bold 13px "Liberation Serif", serif; color: #333; }
.fx small { font-size: 9px; }

.ruler {
    height: 17px;
    display: flex;
    padding-left: 30px;
    overflow: hidden;
    background:
        linear-gradient(#8f8f8f, #8f8f8f) 0 16px / 100% 1px no-repeat,
        repeating-linear-gradient(90deg, #777 0 1px, transparent 1px 20px) 30px 12px / 100% 4px no-repeat,
        #b0b0b0;
    font: 13px/16px "Open Sans", sans-serif;
    color: #444;
}
.ruler span { width: 100px; flex: none; padding-left: 0; border-left: 1px solid #777; }
.canvas { height: 80px; background: #afafaf; display: flex; position: relative; border-top: 1px solid #8f8f8f; }
.vruler { margin-left: 13px; width: 17px; background: repeating-linear-gradient(#777 0 1px, transparent 1px 20px) 12px 0 / 4px 100% no-repeat, #b0b0b0; border-right: 1px solid #8a8a8a; font: 11px/14px "Open Sans", sans-serif; color: #444; }
.vruler span { display: block; transform: rotate(-90deg); width: 14px; height: 14px; text-align: center; margin-top: -4px; margin-left: -2px; }
.canvas-mid { width: 677px; display: flex; justify-content: flex-end; align-items: center; gap: 18px; padding-bottom: 19px; margin-right: 323px; flex: none; }
.canvas-mid svg { width: 32px; height: 30px; }
.pagebar { width: 10px; background: #72a2ae; border-left: 1px solid #777; flex: none; }
.gapbar { height: 10px; background: #dcdcdf; }

/* sheet */
.sheet { height: 744px; display: flex; overflow: hidden; background: #fff; }
.grid {
    width: 1317px;
    display: grid;
    grid-template-columns: 24px 125px 90px 90px 90px 123px 80px 140px 90px 90px 90px 90px 90px 90px 15px;
    grid-template-rows: 19px repeat(31, 23.750px);
    overflow: hidden;
    position: relative;
}
.cell { border-right: 1px solid #c2c2c2; border-bottom: 1px solid #c2c2c2; white-space: nowrap; overflow: hidden; position: relative; }
.hd { background: #e8e8e8; font: 11px/20px "Liberation Mono", monospace; text-align: center; }
.hd.cur { background: #cdeefb; }
.hd.off { background: #fff; border-right-color: #ddd; }
.corner { background: #f0f0f2; }
.rh { font: 12px/25px "Liberation Sans", sans-serif; text-align: center; border-right-width: 2px; }
.rh.cur { background: #cdeefb; }
.lab { font-size: 14.500px; line-height: 24px; text-align: center; }
.fx-cell { font: 13px/23px "Liberation Mono", monospace; letter-spacing: .2px; padding-left: 1px; }
.fx-cell.mid { text-align: center; }
.fx-cell.d2 { padding-left: 8px; }
.fx-cell.ds { font-size: 13.500px; line-height: 25px; font-family: "Liberation Mono", "Noto Sans CJK SC", monospace; padding-left: 2px; }
.box-brown { outline: 2px solid #5a3208; outline-offset: -2px; overflow: visible; }
.box-black { outline: 1px solid #000; outline-offset: -1px; }
.flag::before { content: ""; position: absolute; left: 1px; top: 1px; border-left: 3px solid transparent; border-right: 3px solid transparent; border-top: 4px solid #888; }
.red-corner::after { content: ""; position: absolute; right: -1px; top: 0; border-top: 5px solid #ee1c25; border-left: 5px solid transparent; }
.sliver::after { content: ""; position: absolute; left: 4px; right: 12px; bottom: 0; border-bottom: 1px dotted #555; }
.pagebreak { position: absolute; left: 761px; top: 19px; bottom: 0; border-left: 1px dashed #111; height: 725px; }
.redbox { position: absolute; border: 3px solid #ee1c25; }
.cell-mark { left: 147px; top: 42px; width: 95px; height: 27px; outline: 1px solid #3b82d6; outline-offset: -4px; }
.vscroll { width: 17px; display: flex; flex-direction: column; background: #fff; }
.vscroll b { background: #e6e6e8; height: 688px; }
.vscroll .sbtn:last-child { margin-top: auto; }
.sbtn { height: 17px; display: flex; align-items: center; justify-content: center; flex: none; }
.sbtn svg { width: 10px; height: 6px; }
.hscroll { height: 16px; display: flex; background: #fff; }
.hscroll .sbtn { width: 16px; height: 16px; }
.hscroll .sbtn svg { width: 6px; height: 10px; }
.hscroll b { width: 1208px; background: #e2e2e2; }
.hscroll .right { margin-left: auto; }
.status { height: 21px; display: flex; align-items: center; background: #f5f5f7; }
.sheettab { width: 67px; height: 21px; background: #fff; display: flex; align-items: center; padding-left: 7px; gap: 8px; color: #555; font-size: 10px; }
.sheettab svg { width: 9px; height: 9px; }
.addsheet { width: 22px; height: 14px; margin-left: 8px; }
.addsheet:first-of-type { margin-left: 12px; }
.zoomgroup { margin-left: auto; display: flex; align-items: center; padding-right: 2px; }
.trinav { border-left: 4px solid #999; border-top: 4px solid transparent; border-bottom: 4px solid transparent; margin-right: 16px; }
.trinav.back { transform: scaleX(-1); margin-right: 20px; }
.zm { width: 14px; text-align: center; font: 16px "Liberation Sans", sans-serif; color: #333; }
.slider { width: 214px; height: 1px; background: #ccc; margin: 0 12px 0 6px; position: relative; }
.slider b { position: absolute; left: 103px; top: -7px; width: 4px; height: 14px; border-radius: 2px; background: #333; }
.zoomval { width: 35px; height: 19px; margin-left: 4px; background: #fff; border: 1px solid #ddd; font: 12px/17px "Liberation Sans", sans-serif; text-align: center; }
.pct { width: 14px; text-align: center; font: bold 10px "Liberation Mono", monospace; }

/* right strip and props */
.strip { width: 40px; background: #e9e9eb; display: flex; flex-direction: column; align-items: center; padding-top: 12px; }
.striparrow { height: 12px; border-left: 5px solid #aaa; border-top: 6px solid transparent; border-bottom: 6px solid transparent; margin: 0 0 5px 2px; }
.sti { width: 32px; height: 32px; display: flex; align-items: center; justify-content: center; margin-left: -1px; flex: none; }
.sti svg { width: 20px; height: 20px; }
.sti.on { background: #f5f5f7; height: 28px; margin-bottom: 2px; }
.props { width: 246px; background: #f5f5f7; padding-left: 10px; }
.prop-head { height: 26px; margin-left: -10px; padding: 2px 6px 0 10px; display: flex; align-items: center; justify-content: space-between; border-bottom: 1px solid #d8d8da; }
.prop-head svg { width: 13px; height: 14px; }
.prop-row { height: 20px; margin-top: 10px; display: flex; align-items: center; justify-content: space-between; padding-right: 10px; white-space: nowrap; }
.prop-row:first-of-type { margin-top: 11px; }
.prop-row label { padding-top: 2px; }
.pfield { height: 20px; background: #fff; border: 1px solid #ddd; display: flex; align-items: center; padding-left: 5px; }
.pfield > span { padding-top: 1px; }
.w170 { width: 170px; }
.w182 { width: 182px; }
.pfield b { margin-left: auto; width: 20px; height: 20px; background: #d6d6da; display: flex; align-items: center; justify-content: center; margin-right: -1px; }
.pfield svg { width: 12px; height: 12px; }
.b2 { font: 12px "Liberation Sans", sans-serif; }
.pblank { width: 226px; height: 25px; margin-top: 10px; background: #fff; border: 1px solid #ddd; }

/* taskbar */
.taskbar {
    height: 60px;
    display: flex;
    align-items: center;
    justify-content: space-between;
    color: #f2f2f2;
    background:
        linear-gradient(90deg, #050505 795px, transparent 860px, transparent 1760px, #050505 1815px),
        linear-gradient(#9a9a9a, #626262);
}
.tasks { display: flex; padding-left: 13px; }
.task { width: 55px; height: 60px; display: flex; align-items: center; justify-content: center; position: relative; }
.task svg { width: 30px; height: 30px; }
.task::after { content: ""; position: absolute; left: 24px; bottom: 6px; width: 8px; height: 4px; border-radius: 2px; background: #777; }
.task:first-child::after { display: none; }
.tray { display: flex; align-items: center; padding-right: 26px; }
.t-m { width: 28px; height: 26px; margin-right: 26px; }
.t-up { width: 14px; height: 9px; margin-right: 25px; }
.t-cat { width: 18px; height: 12px; margin-right: 21px; }
.t-wx { width: 20px; height: 18px; margin-right: 20px; }
.t-t { width: 19px; height: 24px; margin-right: 22px; }
.t-ime { font-size: 18px; width: 20px; margin-right: 19px; color: #eee; }
.t-wifi { width: 20px; height: 17px; margin-right: 10px; }
.t-vol { width: 20px; height: 16px; margin-right: 10px; }
.t-bat { width: 20px; height: 20px; margin-right: 19px; }
.clock { display: flex; flex-direction: column; align-items: flex-end; font: 14px/20px "Noto Sans", sans-serif; width: 80px; }
.t-bell { width: 16px; height: 20px; margin-left: 11px; }

/* dialog */
.dialog { position: absolute; left: 442px; top: 336px; width: 884px; height: 591px; background: #f5f5f7; border: 1px solid #d0d0d2; border-radius: 8px; overflow: hidden; }
.dlg-head { height: 38px; background: #f0f0f0; display: flex; align-items: center; padding: 0 0 4px 11px; color: #8a8a8a; font-size: 14px; }
.dlg-head svg:first-child { width: 17px; height: 17px; margin-right: 7px; }
.dlg-x { width: 12px; height: 12px; margin-left: auto; margin-right: 15px; }
.dlg-body { padding: 0 4px 0 1px; }
.dlg-line1 { height: 26px; display: flex; align-items: center; padding: 0 0 2px 6px; white-space: nowrap; }
.searchbox { width: 240px; height: 24px; background: #fff; border: 1px solid #ddd; position: absolute; left: 594px; top: 38px; }
.btn { background: #fafafa; border: 1px solid #d4d4d6; height: 20px; text-align: center; line-height: 18px; white-space: nowrap; }
.b-search { width: 43px; height: 24px; line-height: 22px; margin-left: auto; margin-right: 1px; margin-bottom: -2px; }
.editor { height: 137px; background: #fff; padding-top: 2px; margin-left: 2px; margin-right: -1px; }
.codeline { height: 16px; background: #ffff9f; padding-left: 1px; font: bold 11.660px/13px "Liberation Mono", monospace; }
.fn { color: #2a12d8; }
.pn { color: #e0242a; }
.st { color: #e0238a; }
.checks { height: 30px; display: flex; align-items: center; padding-left: 12px; white-space: nowrap; }
.chk { display: flex; align-items: center; gap: 4px; flex: none; }
.k1 { width: 78px; }
.k2 { width: 90px; }
.k3 { width: 174px; }
.box { width: 13px; height: 13px; background: #fff; border: 1px solid #aaa; position: relative; flex: none; }
.box.on { background: #4a9bf5; border-color: #4a9bf5; }
.box.on::after { content: ""; position: absolute; left: 3px; top: 0; width: 4px; height: 8px; border: solid #fff; border-width: 0 1.500px 1.500px 0; transform: rotate(40deg); }
.b-check { width: 80px; margin-left: auto; }
.b-sim { width: 68px; margin-left: 5px; margin-right: 6px; }
.cols-head { height: 25px; display: flex; align-items: center; padding: 1px 0 0 4px; }
.c1 { width: 140px; flex: none; }
.c2 { width: 140px; flex: none; }
.c3 { width: 163px; flex: none; }
.c4 { width: 422px; flex: none; }
.cols-head .c1, .cols-head .c2 { margin-right: 4px; }
.cols-head .c3 { margin-right: 1px; }
.cols { height: 306px; display: flex; padding-left: 4px; gap: 4px; }
.cols .c3 { margin-right: -3px; }
.list { height: 306px; background: #fff; border: 1px solid #9a9a9a; }
.list li { height: 17px; line-height: 16px; padding-left: 0; white-space: nowrap; }
.list li.on { background: #4a9bf5; color: #fff; }
.list.en li { padding-left: 1px; }
.vars { background: #fff; border: 1px solid #9a9a9a; height: 306px; position: relative; overflow: hidden; padding-top: 1px; }
.vrow { height: 16px; display: flex; align-items: center; padding-left: 21px; position: relative; }
.vrow svg { width: 14px; height: 13px; margin-right: 4px; flex: none; }
.vrow em { color: #c0143c; }
.opened { position: absolute; left: 5px; top: 6px; border-left: 4px solid transparent; border-right: 4px solid transparent; border-top: 4px solid #999; }
.vsub { display: flex; flex-direction: column; margin-left: 39px; }
.vsub span { height: 15px; line-height: 15px; }
.pico { width: 14px; height: 14px; background: #cfe6fb; border: 1px solid #4a9ff5; color: #333; font: 11px/12px "Liberation Sans", sans-serif; text-align: center; margin-right: 4px; }
.vbar { position: absolute; right: 1px; top: 2px; width: 8px; height: 287px; background: #e6e6e8; border-radius: 3px; }
.desc { height: 306px; background: #fff; border: 1px solid #ddd; padding: 3px 2px 0 3px; }
.desc p { height: 15px; line-height: 15px; }
.dlg-foot { height: 28px; display: flex; justify-content: flex-end; align-items: center; gap: 10px; padding-right: 10px; }
.dlg-foot .btn { width: 44px; }
.formula-mark { left: -1px; top: 61px; width: 268px; height: 25px; }
```

FILE: script.js
```js
var heads = ['A','B','C','D','E','F','G','H','I','J','K','L','M',''];
var grid = document.getElementById('grid');

var row1 = ['标签','统计','次数','频率'];
var row2 = [
    {t:'ds1.G(标签)', c:'fx-cell ds box-brown flag'},
    {t:'=', c:'fx-cell mid flag'},
    {t:'=COUNTIFS(', c:'fx-cell box-black red-corner'},
    {t:'=C2/COUNT(', c:'fx-cell d2 box-black'},
    {t:'=MAX(C2[!0])', c:'fx-cell'},
    {t:'=MAX(C2[!', c:'fx-cell sliver'},
    {t:'=MAX(C2[!0]{AND(', c:'fx-cell sliver'}
];

function addCell(cls, text){
    var d = document.createElement('div');
    d.className = 'cell ' + cls;
    d.textContent = text || '';
    grid.appendChild(d);
    return d;
}

addCell('corner');
for(var i=0;i<heads.length;i++){
    addCell('hd' + (i==1 ? ' cur' : '') + (i>6 ? ' off' : ''), heads[i]);
}
for(var r=1;r<=31;r++){
    addCell('rh' + (r==2 ? ' cur' : ''), r);
    for(var c=0;c<heads.length;c++){
        if(r==1 && c<4){
            addCell('lab', row1[c]);
        }else if(r==2 && c<row2.length){
            addCell(row2[c].c, row2[c].t);
        }else{
            addCell('');
        }
    }
}

var brk = document.createElement('div');
brk.className = 'pagebreak';
grid.appendChild(brk);

var mark = document.createElement('div');
mark.className = 'redbox cell-mark';
grid.appendChild(mark);
```
